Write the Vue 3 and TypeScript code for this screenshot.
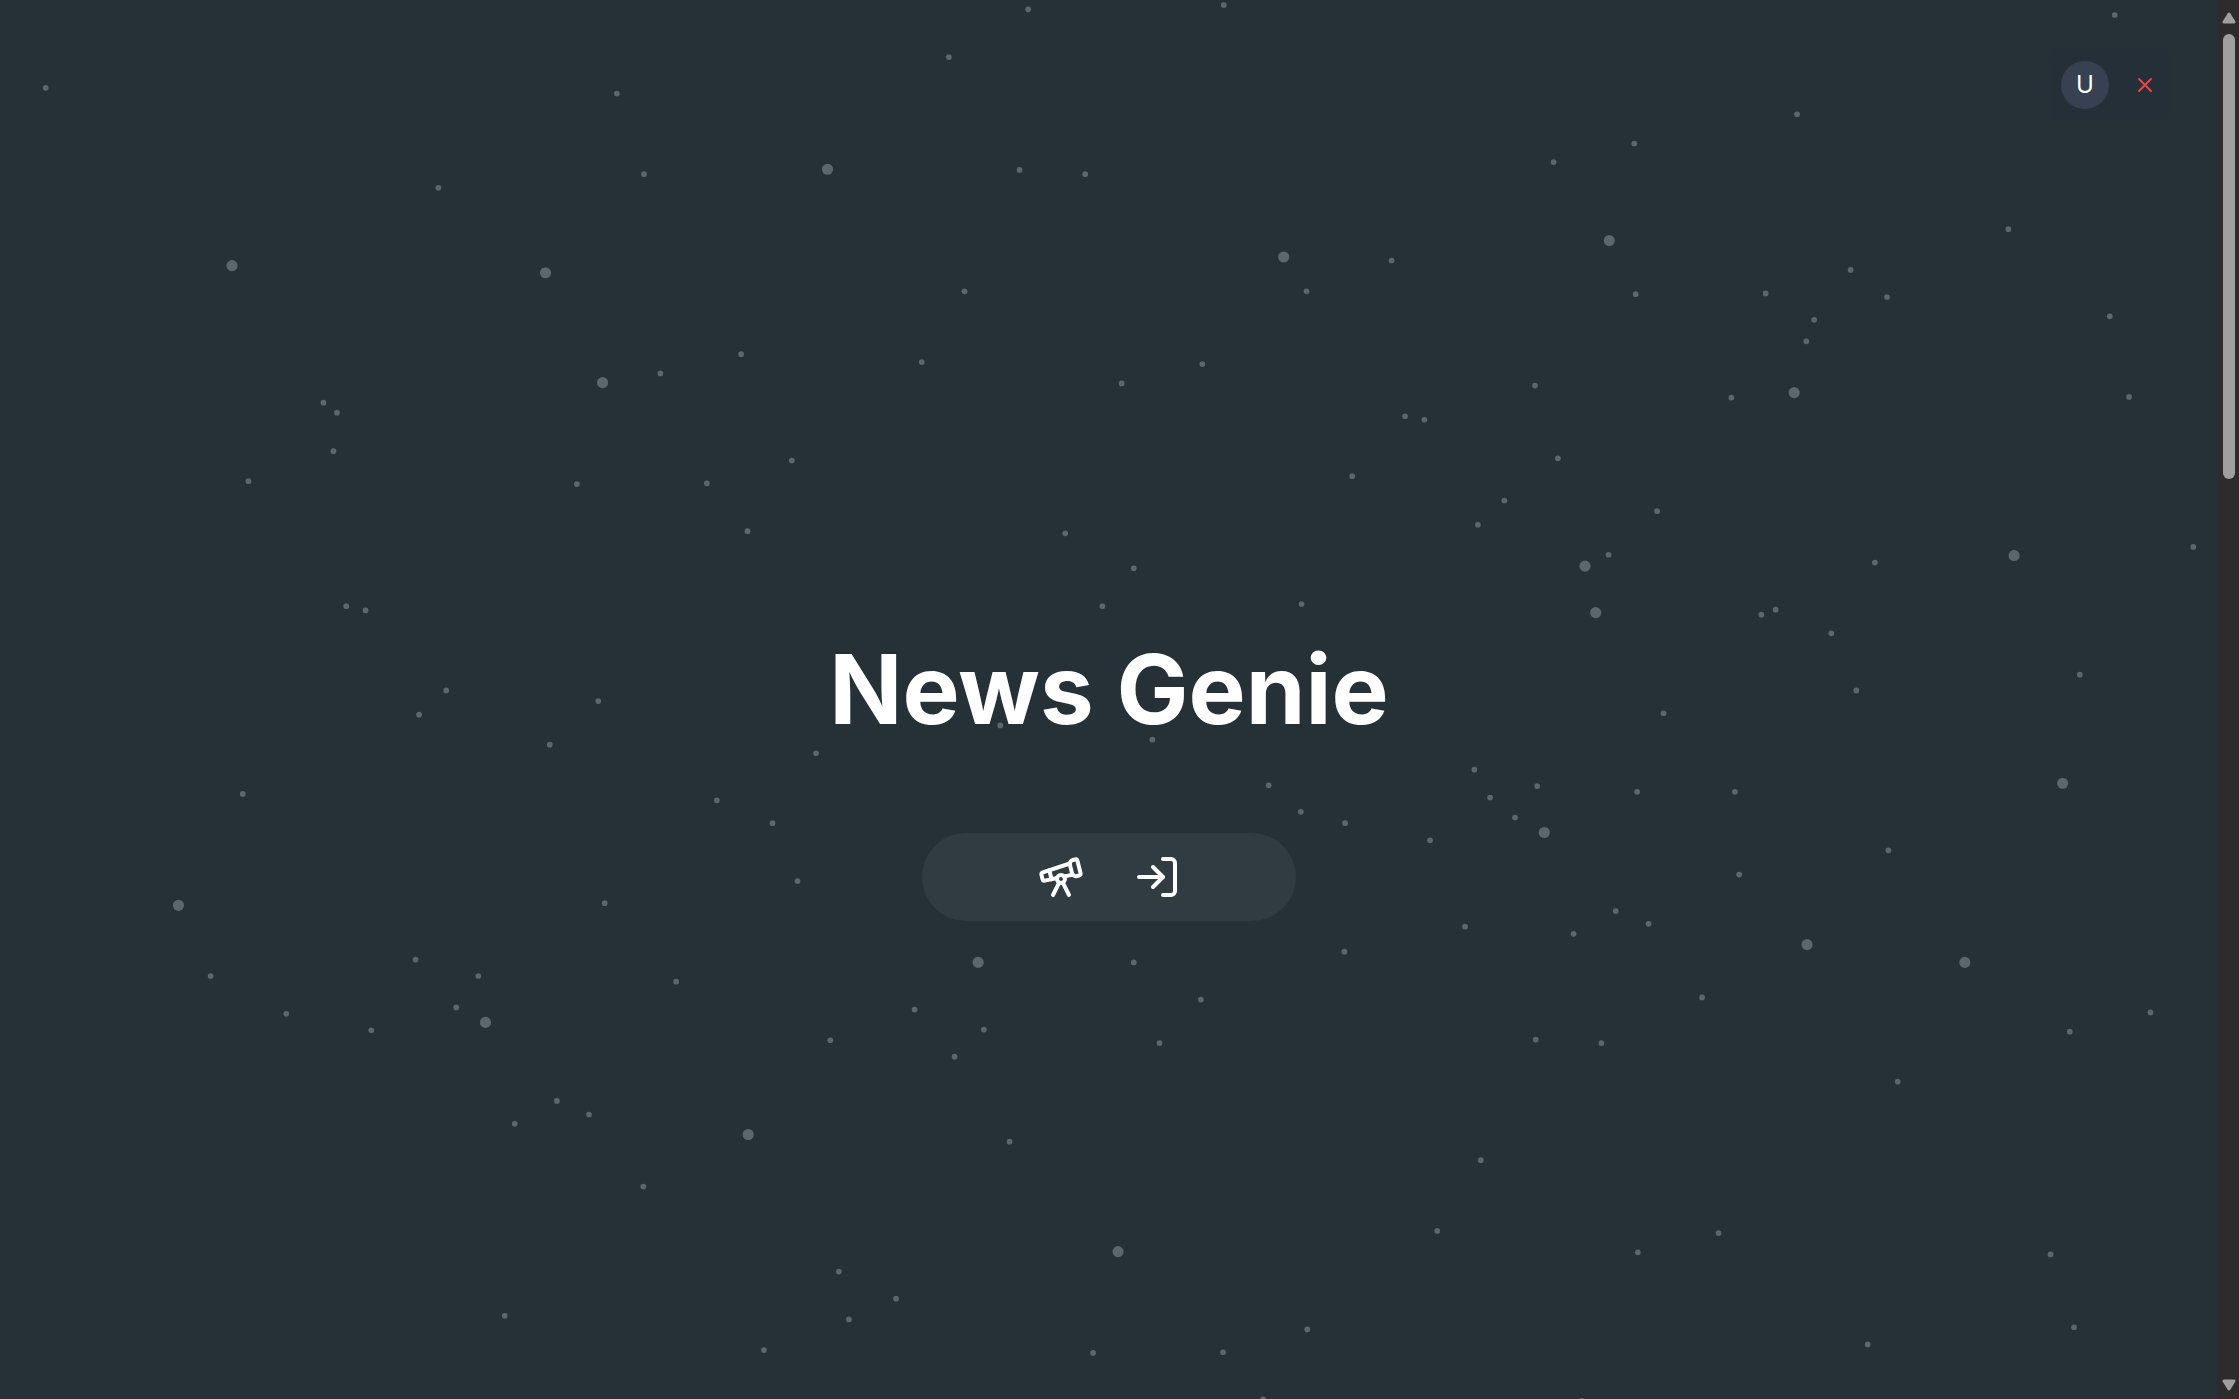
<script setup lang="ts">
type Point = [number, number]

// Star positions on a 1568 x 980 sky
const smallStars: Point[] = [
  [720, 6.5], [857, 3.5], [1481, 10.5], [664.5, 40], [32, 61.5], [432, 65.5], [1258.5, 80], [1144.5, 100.5],
  [307, 131.5], [451, 122], [714, 119], [760, 122], [1088, 113.5], [1406.5, 160.5], [974.5, 182.5],
  [675.5, 204], [915, 204], [1145.5, 206], [1236.5, 205.5], [1296, 189], [1321.5, 208], [1270.5, 224], [1265, 239],
  [1477.5, 221.5], [519, 248], [462.5, 261.5], [645.5, 253.5], [842, 255], [785.5, 268.5], [1075, 270],
  [1212.5, 278.5], [1491, 278], [226.5, 282], [236, 289], [233.5, 316], [984, 291.5], [997.5, 294], [174, 337],
  [404, 339], [495, 338.5], [554.5, 322.5], [947, 333.5], [1091, 321], [1053.5, 350.5], [1160.5, 358],
  [1035, 367.5], [523.5, 372], [746, 373.5], [794, 398], [1126.5, 388.5], [1313, 394], [1536, 383],
  [242.5, 424.5], [256, 427.5], [772, 424.5], [911.5, 423], [1233.5, 430.5], [1243.5, 427], [1282.5, 443.5],
  [1456.5, 472.5], [1300, 483.5], [312.5, 483.5], [293.5, 500.5], [419, 491], [385, 521.5], [571.5, 527.5],
  [700.5, 508], [807, 518], [1165, 499.5], [170, 556], [502, 560.5], [541, 576.5], [558.5, 617],
  [888.5, 550], [911, 568.5], [942, 576.5], [1001.5, 588.5], [1032.5, 539], [1043.5, 558.5], [1061, 572.5],
  [1076.5, 550.5], [1146.5, 554.5], [1215, 554.5], [1322.5, 595.5], [1218, 612.5], [423.5, 632.5], [1131.5, 638],
  [1154.5, 647], [1102, 654], [1026, 649], [941.5, 666.5], [794, 674], [291, 672], [335, 683.5],
  [147.5, 683.5], [473.5, 687.5], [200.5, 710], [260, 721.5], [319.5, 705.5], [640.5, 707], [689, 721], [668.5, 740],
  [581.5, 728.5], [841, 700], [812, 730.5], [1192, 698.5], [1075.5, 728], [1121.5, 730.5], [1449.5, 722.5],
  [1506, 709], [1329, 757.5], [390, 771], [412.5, 780.5], [360.5, 787], [707, 799.5], [1037, 812.5],
  [450.5, 831], [1006.5, 862], [1203.5, 863.5], [1147, 877], [1436, 878.5], [587.5, 890.5], [627.5, 909.5],
  [594.5, 924], [353.5, 921.5], [915.5, 931], [1452.5, 929.5], [1308, 941.5], [535, 945.5], [765.5, 947.5],
  [856.5, 947], [884.5, 980], [1107.5, 981],
]
const largeStars: Point[] = [
  [579.5, 118.5], [162.5, 186], [382, 191], [899, 180], [1127, 168.5], [422, 268], [1256.5, 275],
  [1110, 396.5], [1117.5, 429], [1410.5, 389], [1444.5, 548.5], [1081.5, 583], [125, 634], [685, 674],
  [1265.5, 661.5], [1376, 674], [340, 716], [524, 794.5], [783, 876.5],
]
</script>

<template>
  <div class="page">
    <svg class="sky" viewBox="0 0 1568 980" preserveAspectRatio="xMinYMin slice" aria-hidden="true">
      <circle v-for="([x, y], i) in smallStars" :key="`s${i}`" :cx="x" :cy="y" r="2" />
      <circle v-for="([x, y], i) in largeStars" :key="`l${i}`" :cx="x" :cy="y" r="3.9" />
    </svg>

    <main class="hero">
      <h1>News Genie</h1>
      <nav class="actions" aria-label="Main">
        <a href="#explore" aria-label="Explore">
          <svg class="icon" viewBox="0 0 24 24">
            <path d="m10.065 12.493-6.18 1.318a.934.934 0 0 1-1.108-.702l-.537-2.15a1.07 1.07 0 0 1 .691-1.265l13.504-4.44" />
            <path d="m13.56 11.747 4.332-.924" />
            <path d="m16 21-3.105-6.21" />
            <path d="M16.485 5.94a2 2 0 0 1 1.455-2.425l1.09-.272a1 1 0 0 1 1.212.727l1.515 6.06a1 1 0 0 1-.727 1.213l-1.09.272a2 2 0 0 1-2.425-1.455z" />
            <path d="m6.158 8.633 1.114 4.456" />
            <path d="m8 21 3.105-6.21" />
            <circle cx="12" cy="13" r="2" />
          </svg>
        </a>
        <a href="#login" aria-label="Log in">
          <svg class="icon" viewBox="0 0 24 24">
            <path d="M15 3h4a2 2 0 0 1 2 2v14a2 2 0 0 1-2 2h-4" />
            <path d="m10 17 5-5-5-5" />
            <path d="M15 12H3" />
          </svg>
        </a>
      </nav>
    </main>

    <div class="account">
      <button type="button" class="avatar">U</button>
      <button type="button" class="close" aria-label="Close">
        <svg class="icon" viewBox="0 0 24 24"><path d="M18 6 6 18M6 6l12 12" /></svg>
      </button>
    </div>

    <div class="scrollbar" aria-hidden="true">
      <svg class="arrow" viewBox="0 0 14 12"><path d="M7 2 12 10H2Z" /></svg>
      <div class="track"><div class="thumb"></div></div>
      <svg class="arrow" viewBox="0 0 14 12"><path d="M2 2H12L7 10Z" /></svg>
    </div>
  </div>
</template>

<style>
body {
  margin: 0;
  background: #253137;
}
</style>

<style scoped>
.page {
  position: relative;
  display: flex;
  height: 100vh;
  overflow: hidden;
  background: #253137;
  color: #fff;
  font-family: Inter, "Liberation Sans", sans-serif;
}

.sky {
  position: absolute;
  inset: 0;
  width: 100%;
  height: 100%;
  fill: #5b676c;
}

.hero {
  position: relative;
  flex: 1;
  display: flex;
  flex-direction: column;
  align-items: center;
  justify-content: center;
  gap: 96px;
  padding-top: 162px;
}

h1 {
  margin: 0;
  font-size: 96px;
  line-height: 96px;
  font-weight: 700;
}

.actions {
  display: flex;
  justify-content: center;
  gap: 48px;
  box-sizing: border-box;
  width: 374px;
  padding: 20px;
  border-radius: 44px;
  background: #303c41;
}

.actions a {
  display: block;
  height: 48px;
  color: #fff;
}

.icon {
  display: block;
  width: 48px;
  height: 48px;
  fill: none;
  stroke: currentColor;
  stroke-width: 2;
  stroke-linecap: round;
  stroke-linejoin: round;
}

.account {
  position: absolute;
  top: 49px;
  right: 70px;
  display: flex;
  align-items: center;
  gap: 24px;
  padding: 12px;
  border-radius: 8px;
  background: #242f37;
}

button {
  padding: 0;
  border: 0;
  background: none;
  font: inherit;
}

.avatar {
  width: 48px;
  height: 48px;
  border-radius: 50%;
  background: #374151;
  color: #fff;
  font-size: 24px;
  line-height: 48px;
}

.close {
  color: #ef4444;
}

.close .icon {
  width: 24px;
  height: 24px;
}

.scrollbar {
  position: relative;
  display: flex;
  flex-direction: column;
  align-items: center;
  gap: 10px;
  box-sizing: border-box;
  width: 21px;
  padding: 12px 0 8px;
  background: #2c2c2c;
}

.arrow {
  width: 14px;
  height: 12px;
  fill: #9f9f9f;
  stroke: #9f9f9f;
  stroke-width: 3;
  stroke-linejoin: round;
}

.track {
  flex: 1;
}

.thumb {
  width: 12px;
  height: 33.3%;
  border-radius: 6px;
  background: #9f9f9f;
}
</style>
